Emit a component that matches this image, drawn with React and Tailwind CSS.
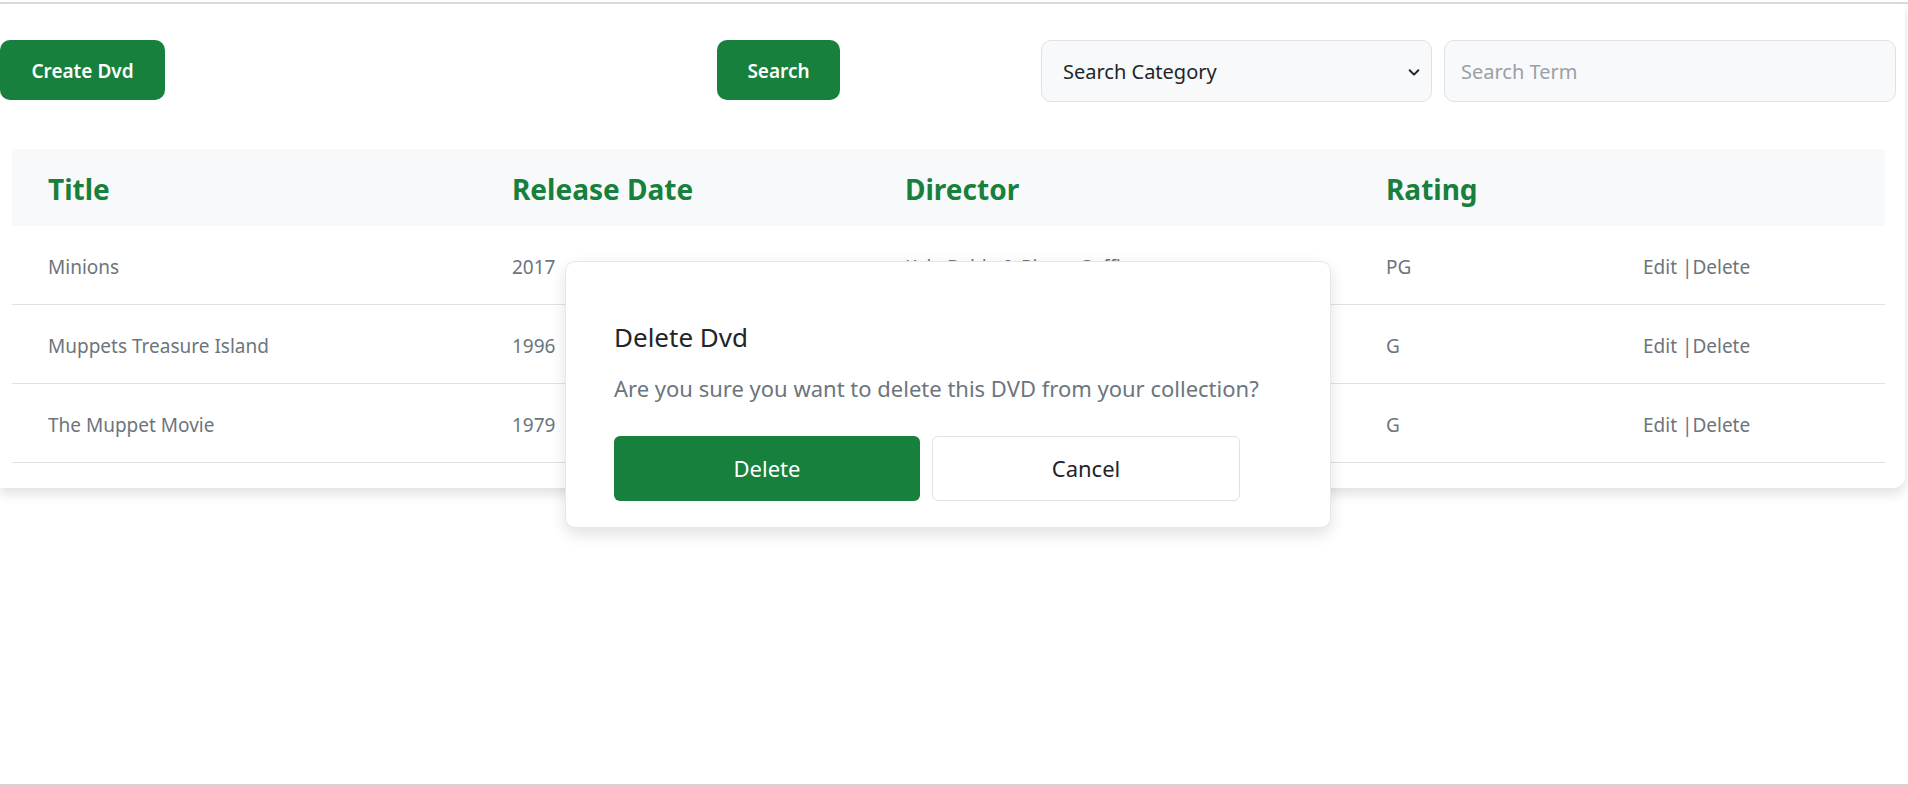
import React from 'react';

const dvds = [
  { title: 'Minions', year: '2017', director: 'Kyle Balda & Pierre Coffin', rating: 'PG' },
  { title: 'Muppets Treasure Island', year: '1996', director: 'Brian Henson', rating: 'G' },
  { title: 'The Muppet Movie', year: '1979', director: 'James Frawley', rating: 'G' },
];

// same column widths for header and body rows
const cols = 'grid grid-cols-[464px_393px_481px_257px_1fr]';

export default function App() {
  return (
    <div
      className="relative w-full h-[785px] bg-white overflow-hidden"
      style={{ fontFamily: '"Noto Sans", "Open Sans", sans-serif' }}
    >
      {/* top rule */}
      <div className="h-[2px] mt-[2px] bg-[#dcdcdc]" />

      {/* main card */}
      <div className="w-[1905px] bg-white rounded-br-xl shadow-[0_6px_12px_rgba(0,0,0,0.12)] pb-[25px]">
        {/* toolbar */}
        <div className="flex items-start pt-[36px]">
          <button className="w-[165px] h-[60px] pt-[3px] rounded-[10px] bg-[#17803d] text-white text-[19px] font-semibold">
            Create Dvd
          </button>
          <button className="ml-[552px] w-[123px] h-[60px] pt-[3px] rounded-[10px] bg-[#17803d] text-white text-[19px] font-semibold">
            Search
          </button>
          <div className="ml-[201px] w-[391px] h-[62px] pt-[2px] rounded-[10px] border border-[#dee2e6] bg-[#f8f9fa] flex items-center justify-between pl-[21px] pr-[10px]">
            <span className="text-[20px] text-[#212529]">Search Category</span>
            <svg width="14" height="14" viewBox="0 0 16 16" fill="none" stroke="#212529" strokeWidth="2.2" strokeLinecap="round" strokeLinejoin="round">
              <path d="M3 6l5 5 5-5" />
            </svg>
          </div>
          <div className="ml-[12px] w-[452px] h-[62px] pt-[2px] rounded-[10px] border border-[#dee2e6] bg-[#f8f9fa] flex items-center pl-[16px]">
            <span className="text-[20px] text-[#9aa0a6]">Search Term</span>
          </div>
        </div>

        {/* table */}
        <div className="ml-[12px] w-[1873px] mt-[47px]">
          <div className={`${cols} h-[77px] pt-[2px] items-center bg-[#f8f9fa] text-[#17803d] text-[28px] font-bold`}>
            <div className="pl-[36px]">Title</div>
            <div className="pl-[36px]">Release Date</div>
            <div className="pl-[36px]">Director</div>
            <div className="pl-[36px]">Rating</div>
            <div />
          </div>
          {dvds.map((d) => (
            <div key={d.title} className={`${cols} h-[79px] pt-[4px] items-center border-b border-[#dee2e6] text-[19px] text-[#6c757d]`}>
              <div className="pl-[36px]">{d.title}</div>
              <div className="pl-[36px]">{d.year}</div>
              <div className="pl-[36px]">{d.director}</div>
              <div className="pl-[36px]">{d.rating}</div>
              <div className="pl-[36px]">Edit |Delete</div>
            </div>
          ))}
        </div>
      </div>

      {/* delete dialog */}
      <div className="absolute left-[565px] top-[261px] w-[766px] h-[267px] bg-white rounded-[10px] border border-[#e5e7eb] shadow-[0_6px_16px_rgba(0,0,0,0.12)] pl-[48px]">
        <div className="mt-[59px] text-[26px] leading-[32px] text-[#212529]">Delete Dvd</div>
        <div className="mt-[19px] text-[22px] leading-[32px] text-[#6c757d]">
          Are you sure you want to delete this DVD from your collection?
        </div>
        <div className="mt-[32px] flex gap-[12px]">
          <button className="w-[306px] h-[65px] rounded-[6px] bg-[#17803d] text-white text-[22px]">Delete</button>
          <button className="w-[308px] h-[65px] rounded-[6px] bg-white border border-[#dee2e6] text-[#212529] text-[22px]">Cancel</button>
        </div>
      </div>

      {/* bottom rule */}
      <div className="absolute left-0 right-0 bottom-0 h-[1px] bg-[#d6d6d6]" />
    </div>
  );
}
